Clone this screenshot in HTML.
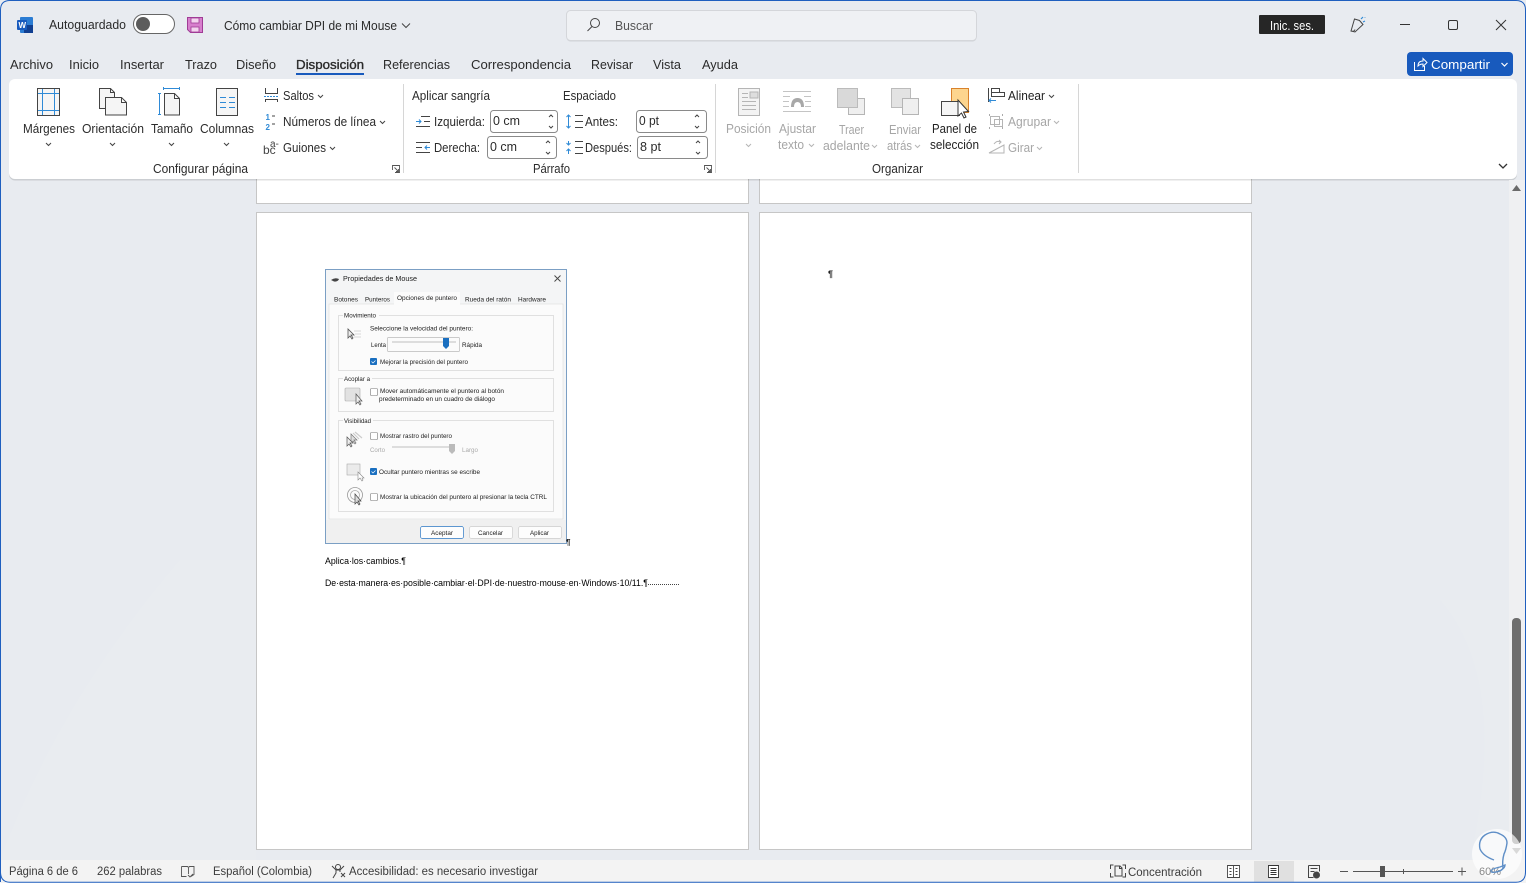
<!DOCTYPE html>
<html><head><meta charset="utf-8"><style>
html,body{margin:0;padding:0;width:1526px;height:883px;overflow:hidden;background:#e8ebf0}
svg{display:block;position:absolute;left:0;top:0}
text{font-family:"Liberation Sans",sans-serif;font-size:12.5px;fill:#2b2b2b;white-space:pre}
.g text,text.g{fill:#a6a6a6}
.s text{font-size:11.5px;fill:#3c3c3c}
.d text{font-size:6.8px;fill:#1c1c1c}
.i{fill:none;stroke:#4a4a4a;stroke-width:1}
.b{fill:none;stroke:#2f8ad6;stroke-width:1}
.c{fill:none;stroke:#444;stroke-width:1}
.gi{fill:none;stroke:#b5b5b5;stroke-width:1}
</style></head><body>
<svg width="1526" height="883" viewBox="0 0 1526 883" xmlns="http://www.w3.org/2000/svg">
<rect width="1526" height="883" fill="#e8ebf0"/>
<path d="M1440 600Q1510 680 1470 860L1512 860L1512 600Z" fill="#e9ecf0"/>
<path d="M0 860Q60 700 180 560L256 560L256 860Z" fill="#e9ecf0"/>

<!-- pages -->
<rect x="256.500" y="150" width="492" height="53.500" fill="#fff" stroke="#c6c6c6"/>
<rect x="759.500" y="150" width="492" height="53.500" fill="#fff" stroke="#c6c6c6"/>
<rect x="256.500" y="212.500" width="492" height="637" fill="#fff" stroke="#c6c6c6"/>
<rect x="759.500" y="212.500" width="492" height="637" fill="#fff" stroke="#c6c6c6"/>
<text x="828" y="277" style="font-size:9px;fill:#222;font-weight:bold">¶</text>

<!-- dialog image -->
<g class="d" style="filter:blur(.35px)">
<rect x="325.500" y="269.500" width="241" height="274" fill="#f4f5f6" stroke="#7b9fc4"/>
<rect x="329" y="304" width="234" height="215" fill="#fbfbfb" stroke="#dcdcdc" stroke-width=".6"/>
<rect x="394" y="292" width="66" height="13" fill="#fbfbfb"/>
<rect x="326" y="520" width="240" height="23" fill="#f0f0f0"/>
<path d="M331 280q4-3 8-1q-1 3-5 2.500z" fill="#444"/>
<text x="343" y="281" textLength="74" lengthAdjust="spacingAndGlyphs" style="font-size:7.400px">Propiedades de Mouse</text>
<path d="M554.500 275.500l6 6m0-6l-6 6" stroke="#444" fill="none" stroke-width=".9"/>
<text x="334" y="301.500" textLength="24" lengthAdjust="spacingAndGlyphs">Botones</text>
<text x="365" y="301.500" textLength="25" lengthAdjust="spacingAndGlyphs">Punteros</text>
<text x="397" y="300" textLength="60" lengthAdjust="spacingAndGlyphs">Opciones de puntero</text>
<text x="465" y="301.500" textLength="46" lengthAdjust="spacingAndGlyphs">Rueda del ratón</text>
<text x="518" y="301.500" textLength="28" lengthAdjust="spacingAndGlyphs">Hardware</text>
<g fill="none" stroke="#dadada" stroke-width=".8">
<rect x="338.500" y="315.500" width="215" height="55"/>
<rect x="338.500" y="378.500" width="215" height="33"/>
<rect x="338.500" y="420.500" width="215" height="91"/>
</g>
<rect x="343" y="311" width="36" height="8" fill="#fbfbfb"/>
<rect x="343" y="375" width="29" height="8" fill="#fbfbfb"/>
<rect x="343" y="417" width="30" height="8" fill="#fbfbfb"/>
<text x="344" y="317.500" textLength="32" lengthAdjust="spacingAndGlyphs">Movimiento</text>
<text x="344" y="381" textLength="26" lengthAdjust="spacingAndGlyphs">Acoplar a</text>
<text x="344" y="423" textLength="27" lengthAdjust="spacingAndGlyphs">Visibilidad</text>
<path d="M348 329l0 9 2-2 2 3 1-1-2-3 3 0z" fill="#eee" stroke="#555" stroke-width=".8"/>
<path d="M354 331h7M355 334h6M354 337h7" stroke="#ccc" stroke-width=".8"/>
<text x="370" y="330.500" textLength="103" lengthAdjust="spacingAndGlyphs">Seleccione la velocidad del puntero:</text>
<text x="371" y="347" textLength="15" lengthAdjust="spacingAndGlyphs">Lenta</text>
<rect x="387.500" y="337.500" width="72" height="14" rx="1" fill="#fbfbfb" stroke="#bbb" stroke-width=".7"/>
<rect x="392" y="341" width="64" height="2" fill="#ddd"/>
<path d="M443 338h6v8l-3 3-3-3z" fill="#1a6fc0"/>
<text x="462" y="347" textLength="20" lengthAdjust="spacingAndGlyphs">Rápida</text>
<rect x="370" y="358" width="7" height="7" rx="1" fill="#1a6fc0"/>
<path d="M371.500 361.500l1.500 1.500 2.500-2.500" stroke="#fff" fill="none" stroke-width=".7"/>
<text x="380" y="364" textLength="88" lengthAdjust="spacingAndGlyphs">Mejorar la precisión del puntero</text>
<rect x="345" y="388" width="15" height="13" rx="1" fill="#e2e2e2" stroke="#aaa" stroke-width=".6"/>
<path d="M356 394l0 10 2-2 2 3 1-1-2-3 3 0z" fill="#eee" stroke="#555" stroke-width=".7"/>
<rect x="370.500" y="388.500" width="7" height="7" rx="1" fill="#fff" stroke="#777" stroke-width=".6"/>
<text x="380" y="393" textLength="124" lengthAdjust="spacingAndGlyphs">Mover automáticamente el puntero al botón</text>
<text x="379" y="401" textLength="116" lengthAdjust="spacingAndGlyphs">predeterminado en un cuadro de diálogo</text>
<path d="M351 434l0 9 2-2 2 3 1-1-2-3 3 0z" fill="#ddd" stroke="#777" stroke-width=".7"/>
<path d="M347 437l0 9 2-2 2 3 1-1-2-3 3 0z" fill="#eee" stroke="#555" stroke-width=".7"/>
<path d="M355 432l7 6M353 433l6 6" stroke="#ccc" stroke-width="1.200"/>
<rect x="370.500" y="432.500" width="7" height="7" rx="1" fill="#fff" stroke="#777" stroke-width=".6"/>
<text x="380" y="438" textLength="72" lengthAdjust="spacingAndGlyphs">Mostrar rastro del puntero</text>
<text x="370" y="452" textLength="15" lengthAdjust="spacingAndGlyphs" style="fill:#aaa">Corto</text>
<rect x="392" y="446" width="60" height="2" fill="#ddd"/>
<path d="M449 444h6v7l-3 3-3-3z" fill="#bbb"/>
<text x="462" y="452" textLength="16" lengthAdjust="spacingAndGlyphs" style="fill:#aaa">Largo</text>
<rect x="347" y="464" width="13" height="11" fill="#ebebeb" stroke="#aaa" stroke-width=".6"/>
<path d="M358 472l0 8 2-2 2 3 1-1-1-2 2 0z" fill="#fff" stroke="#888" stroke-width=".6"/>
<rect x="370" y="468" width="7" height="7" rx="1" fill="#1a6fc0"/>
<path d="M371.500 471.500l1.500 1.500 2.500-2.500" stroke="#fff" fill="none" stroke-width=".7"/>
<text x="379" y="474" textLength="101" lengthAdjust="spacingAndGlyphs">Ocultar puntero mientras se escribe</text>
<circle cx="355" cy="495" r="7.500" fill="none" stroke="#999" stroke-width=".8"/>
<circle cx="355" cy="495" r="4.500" fill="none" stroke="#aaa" stroke-width=".8"/>
<path d="M355 494l0 10 2-2 2 3 1-1-2-3 3 0z" fill="#ddd" stroke="#444" stroke-width=".7"/>
<rect x="370.500" y="493.500" width="7" height="7" rx="1" fill="#fff" stroke="#777" stroke-width=".6"/>
<text x="380" y="499" textLength="167" lengthAdjust="spacingAndGlyphs">Mostrar la ubicación del puntero al presionar la tecla CTRL</text>
<rect x="420.500" y="526.500" width="43" height="12" rx="2" fill="#fdfdfd" stroke="#2a76c4" stroke-width=".7"/>
<rect x="469.500" y="526.500" width="43" height="12" rx="2" fill="#fdfdfd" stroke="#ccc" stroke-width=".7"/>
<rect x="518.500" y="526.500" width="43" height="12" rx="2" fill="#fdfdfd" stroke="#ccc" stroke-width=".7"/>
<text x="431" y="535" textLength="22" lengthAdjust="spacingAndGlyphs">Aceptar</text>
<text x="478" y="535" textLength="25" lengthAdjust="spacingAndGlyphs">Cancelar</text>
<text x="530" y="535" textLength="19" lengthAdjust="spacingAndGlyphs">Aplicar</text>
</g>
<text x="566" y="545" style="font-size:8px;fill:#222;font-weight:bold">¶</text>
<g style="filter:blur(.2px)">
<text x="325" y="564" textLength="81" lengthAdjust="spacingAndGlyphs" style="font-size:9px;fill:#000">Aplica·los·cambios.¶</text>
<text x="325" y="586" textLength="323" lengthAdjust="spacingAndGlyphs" style="font-size:9px;fill:#000">De·esta·manera·es·posible·cambiar·el·DPI·de·nuestro·mouse·en·Windows·10/11.¶</text>
<path d="M648 584.500H680" stroke="#444" stroke-dasharray="1 1"/>
</g>

<!-- title bar -->
<rect x="0" y="0" width="1526" height="79" fill="#e8ebf0"/>
<rect x="20" y="17" width="13" height="16" rx="1" fill="#2b7cd3"/>
<rect x="24" y="25" width="9" height="8" fill="#103f91"/>
<rect x="17" y="20" width="10" height="10" rx="1" fill="#185abd"/>
<text x="18.500" y="28" style="font-size:8px;font-weight:bold;fill:#fff">W</text>
<text x="49" y="29" textLength="77" lengthAdjust="spacingAndGlyphs">Autoguardado</text>
<rect x="133.500" y="14.500" width="41" height="19" rx="9.500" fill="#fff" stroke="#666"/>
<circle cx="143" cy="24" r="7" fill="#5c5c5c"/>
<path d="M187.500 17.500h15v15h-12l-3-3z" fill="#d77fcd" stroke="#a03c96"/>
<rect x="191" y="18" width="8" height="5" fill="#f3d4ef" stroke="#a03c96" stroke-width=".8"/>
<rect x="191" y="27" width="8" height="5" fill="#f3d4ef" stroke="#a03c96" stroke-width=".8"/>
<text x="224" y="30" textLength="173" lengthAdjust="spacingAndGlyphs">Cómo cambiar DPI de mi Mouse</text>
<path d="M402 23.500l4 4 4-4" class="c" stroke-width="1.300"/>
<rect x="566.500" y="11.500" width="410" height="30" rx="4" fill="#000" opacity=".1"/>
<rect x="566.500" y="10.500" width="410" height="30" rx="4" fill="#eff1f4" stroke="#d4d6da"/>
<circle cx="595" cy="23" r="4.500" class="c"/>
<path d="M592 26.500l-4.500 4.500" class="c"/>
<text x="615" y="30" textLength="38" lengthAdjust="spacingAndGlyphs" style="fill:#555">Buscar</text>
<rect x="1259" y="15" width="66" height="19" rx="1" fill="#262626"/>
<text x="1270" y="30" textLength="44" lengthAdjust="spacingAndGlyphs" style="fill:#fff">Inic. ses.</text>
<path d="M1351 31l3.500-12 5 1.500 3.500 4-8 7.500zM1351 31q3 1 4-1.500" class="c"/>
<path d="M1361 19l2-2M1363 22l2-1M1365 17.500l0 .5" stroke="#2f8ad6" stroke-width="1.200" fill="none"/>
<path d="M1400 24.500h10" stroke="#333" stroke-width="1"/>
<rect x="1448.500" y="20.500" width="9" height="9" rx="1.500" fill="none" stroke="#333"/>
<path d="M1496 20l10 10m0-10l-10 10" stroke="#333" stroke-width="1" fill="none"/>

<!-- tabs -->
<text x="10" y="69" textLength="43" lengthAdjust="spacingAndGlyphs">Archivo</text>
<text x="69" y="69" textLength="30" lengthAdjust="spacingAndGlyphs">Inicio</text>
<text x="120" y="69" textLength="44" lengthAdjust="spacingAndGlyphs">Insertar</text>
<text x="185" y="69" textLength="32" lengthAdjust="spacingAndGlyphs">Trazo</text>
<text x="236" y="69" textLength="40" lengthAdjust="spacingAndGlyphs">Diseño</text>
<text x="296" y="69" textLength="68" lengthAdjust="spacingAndGlyphs" stroke="#2b2b2b" stroke-width=".35">Disposición</text>
<rect x="296" y="73" width="68" height="2" fill="#185abd"/>
<text x="383" y="69" textLength="67" lengthAdjust="spacingAndGlyphs">Referencias</text>
<text x="471" y="69" textLength="100" lengthAdjust="spacingAndGlyphs">Correspondencia</text>
<text x="591" y="69" textLength="42" lengthAdjust="spacingAndGlyphs">Revisar</text>
<text x="653" y="69" textLength="28" lengthAdjust="spacingAndGlyphs">Vista</text>
<text x="702" y="69" textLength="36" lengthAdjust="spacingAndGlyphs">Ayuda</text>
<rect x="1407" y="52" width="106" height="24" rx="4" fill="#185abd"/>
<path d="M1414.500 62v8.500h10V66M1418 66q0-5 5-5v-2.500l4 4-4 4V64q-3 0-5 2z" fill="none" stroke="#fff"/>
<text x="1431" y="69" textLength="59" lengthAdjust="spacingAndGlyphs" style="fill:#fff">Compartir</text>
<path d="M1501.500 63l3 3 3-3" fill="none" stroke="#fff" stroke-width="1.200"/>

<!-- ribbon -->
<rect x="9" y="79" width="1508" height="100" rx="6" fill="#000" opacity=".12" transform="translate(0,1.500)"/>
<rect x="9" y="79" width="1508" height="100" rx="6" fill="#fff"/>
<path d="M403.500 84v89M715.500 84v89M1078.500 84v89" stroke="#d6d6d6"/>

<!-- Page setup icons -->
<rect x="37.500" y="88.500" width="22" height="27" fill="#f5f5f5" stroke="#444"/>
<path d="M42.500 89v26M54.500 89v26M38 93.500h21M38 110.500h21" class="b"/>
<path d="M99.500 88.500h11l4 4v5h-8v11h-7zM110.500 88.500v4h4" fill="#f5f5f5" stroke="#444"/>
<path d="M105.500 97.500h16l5 5v12.500h-21zM121.500 97.500v5h5" fill="#f5f5f5" stroke="#444"/>
<path d="M163.500 88.500h16M163.500 87v3M179.500 87v3M159.500 93v22M158 93.500h3M158 114.500h3" class="b"/>
<path d="M164.500 93.500h10l5 5v16.500h-15zM174.500 93.500v5h5" fill="#f5f5f5" stroke="#444"/>
<rect x="216.500" y="88.500" width="21" height="27" fill="#f5f5f5" stroke="#444"/>
<path d="M220 97.500h6M229 97.500h6M220 102.500h6M229 102.500h6M220 107.500h6M229 107.500h6" class="b"/>
<text x="23" y="133" textLength="52" lengthAdjust="spacingAndGlyphs">Márgenes</text>
<text x="82" y="133" textLength="62" lengthAdjust="spacingAndGlyphs">Orientación</text>
<text x="151" y="133" textLength="42" lengthAdjust="spacingAndGlyphs">Tamaño</text>
<text x="200" y="133" textLength="54" lengthAdjust="spacingAndGlyphs">Columnas</text>
<path d="M46 143l2.500 2.500 2.500-2.500M110 143l2.500 2.500 2.500-2.500M169 143l2.500 2.500 2.500-2.500M224 143l2.500 2.500 2.500-2.500" class="c"/>

<path d="M265.500 88v5.500h12V88M265.500 102v-2.500h12v2.500" fill="none" stroke="#444"/>
<path d="M264 96.500h15" stroke="#2f8ad6" stroke-dasharray="2 1" fill="none"/>
<text x="283" y="100" textLength="31" lengthAdjust="spacingAndGlyphs">Saltos</text>
<path d="M318 95l2.500 2.500 2.500-2.500" class="c"/>
<text x="265.500" y="120" style="font-size:8px;fill:#2f8ad6;font-weight:bold">1</text>
<text x="265.500" y="130" style="font-size:8px;fill:#2f8ad6;font-weight:bold">2</text>
<path d="M272 116h3M272 124h3" stroke="#444"/>
<text x="283" y="126" textLength="93" lengthAdjust="spacingAndGlyphs">Números de línea</text>
<path d="M380 121l2.500 2.500 2.500-2.500" class="c"/>
<text x="263" y="154" style="font-size:12px;fill:#444">bc</text>
<text x="270" y="147" style="font-size:10px;fill:#444">a-</text>
<text x="283" y="152" textLength="43" lengthAdjust="spacingAndGlyphs">Guiones</text>
<path d="M330 147l2.500 2.500 2.500-2.500" class="c"/>
<text x="153" y="173" textLength="95" lengthAdjust="spacingAndGlyphs">Configurar página</text>
<path d="M392.500 170v-4.500h7v7H395M394.500 167.500l4 4M398.500 169v2.500H396" fill="none" stroke="#555" stroke-width=".9"/>

<!-- Paragraph -->
<text x="412" y="100" textLength="78" lengthAdjust="spacingAndGlyphs">Aplicar sangría</text>
<text x="563" y="100" textLength="53" lengthAdjust="spacingAndGlyphs">Espaciado</text>
<path d="M421 116.500h9M416 126.500h14M424 121.500h6" stroke="#444"/>
<path d="M416 121.500h5M419 119.500l2 2-2 2" class="b"/>
<path d="M416 142.500h14M416 152.500h14M416 147.500h6" stroke="#444"/>
<path d="M425 147.500h5M427 145.500l-2 2 2 2" class="b"/>
<text x="434" y="126" textLength="51" lengthAdjust="spacingAndGlyphs">Izquierda:</text>
<text x="434" y="152" textLength="46" lengthAdjust="spacingAndGlyphs">Derecha:</text>
<text x="585" y="126" textLength="33" lengthAdjust="spacingAndGlyphs">Antes:</text>
<text x="585" y="152" textLength="47" lengthAdjust="spacingAndGlyphs">Después:</text>
<g fill="#fff" stroke="#8a8a8a">
<rect x="490.500" y="110.500" width="67" height="22" rx="3"/>
<rect x="487.500" y="136.500" width="69" height="22" rx="3"/>
<rect x="636.500" y="110.500" width="70" height="22" rx="3"/>
<rect x="637.500" y="136.500" width="70" height="22" rx="3"/>
</g>
<text x="493" y="125" textLength="27" lengthAdjust="spacingAndGlyphs">0 cm</text>
<text x="490" y="151" textLength="27" lengthAdjust="spacingAndGlyphs">0 cm</text>
<text x="639" y="125" textLength="20" lengthAdjust="spacingAndGlyphs">0 pt</text>
<text x="640" y="151" textLength="21" lengthAdjust="spacingAndGlyphs">8 pt</text>
<path d="M549 117l2-2 2 2M549 126l2 2 2-2M546 143l2-2 2 2M546 152l2 2 2-2M695 117l2-2 2 2M695 126l2 2 2-2M696 143l2-2 2 2M696 152l2 2 2-2" class="c"/>
<path d="M568.500 115v13M566.500 117l2-2 2 2M566.500 126l2 2 2-2M568.500 141v4M566.500 143l2 2 2-2M568.500 149v5M566.500 151l2-2 2 2" class="b"/>
<path d="M575 115.500h8M575 121.500h8M575 127.500h8M575 141.500h8M575 147.500h8M575 153.500h8" stroke="#444"/>
<text x="533" y="173" textLength="37" lengthAdjust="spacingAndGlyphs">Párrafo</text>
<path d="M704.500 170v-4.500h7v7H707M706.500 167.500l4 4M710.500 169v2.500H708" fill="none" stroke="#555" stroke-width=".9"/>

<!-- Arrange -->
<rect x="738.500" y="88.500" width="21" height="27" fill="#f3f3f3" stroke="#b5b5b5"/>
<rect x="750" y="92" width="8" height="6" fill="#ddd" stroke="#b5b5b5"/>
<path d="M742 93.500h6M742 97.500h6M742 101.500h14M742 105.500h14M742 109.500h14" class="gi"/>
<path d="M783 91.500h28M783 96.500h7M804 96.500h7M783 101.500h6M805 101.500h6M783 106.500h6M805 106.500h6M783 111.500h28" stroke="#c4c4c4" fill="none"/>
<path d="M791 107q0-9 6.500-9t6.500 9h-3q0-5-3.500-5t-3.500 5z" fill="#a8a8a8"/>
<rect x="848.500" y="98.500" width="16" height="16" fill="#efefef" stroke="#b5b5b5"/>
<rect x="837.500" y="88.500" width="20" height="19" fill="#d9d9d9" stroke="#bbb"/>
<rect x="891.500" y="88.500" width="19" height="19" fill="#e3e3e3" stroke="#bbb"/>
<rect x="902.500" y="98.500" width="16" height="16" fill="#efefef" stroke="#b5b5b5"/>
<rect x="951.500" y="88.500" width="17" height="24" fill="#fdd58e" stroke="#d9822b"/>
<rect x="941.500" y="101.500" width="18" height="14" fill="#f5f5f5" stroke="#444"/>
<path d="M958 100l0 16 3.500-3 2.500 5 2-1-2.500-5 5-.5z" fill="#fff" stroke="#333"/>
<g class="g">
<text x="726" y="133" textLength="45" lengthAdjust="spacingAndGlyphs">Posición</text>
<text x="779" y="133" textLength="37" lengthAdjust="spacingAndGlyphs">Ajustar</text>
<text x="778" y="149" textLength="26" lengthAdjust="spacingAndGlyphs">texto</text>
<text x="839" y="134" textLength="25" lengthAdjust="spacingAndGlyphs">Traer</text>
<text x="823" y="150" textLength="47" lengthAdjust="spacingAndGlyphs">adelante</text>
<text x="889" y="134" textLength="32" lengthAdjust="spacingAndGlyphs">Enviar</text>
<text x="887" y="150" textLength="25" lengthAdjust="spacingAndGlyphs">atrás</text>
<text x="1008" y="126" textLength="43" lengthAdjust="spacingAndGlyphs">Agrupar</text>
<text x="1008" y="152" textLength="26" lengthAdjust="spacingAndGlyphs">Girar</text>
</g>
<path d="M746 144l2.500 2.500 2.500-2.500M809 144l2.500 2.500 2.500-2.500M872 145l2.500 2.500 2.500-2.500M915 145l2.500 2.500 2.500-2.500M1054 121l2.500 2.500 2.500-2.500M1037 147l2.500 2.500 2.500-2.500" class="gi"/>
<text x="932" y="133" textLength="45" lengthAdjust="spacingAndGlyphs" style="fill:#222">Panel de</text>
<text x="930" y="149" textLength="49" lengthAdjust="spacingAndGlyphs" style="fill:#222">selección</text>
<path d="M988.500 88v14" stroke="#444"/>
<rect x="991.500" y="88.500" width="8" height="4" fill="#fff" stroke="#444"/>
<rect x="991.500" y="92.500" width="13" height="4" fill="#fff" stroke="#444"/>
<path d="M989 100.500h7M991 98.500l-2 2 2 2" class="b"/>
<text x="1008" y="100" textLength="37" lengthAdjust="spacingAndGlyphs" style="fill:#222">Alinear</text>
<path d="M1049 95l2.500 2.500 2.500-2.500" class="c"/>
<path d="M989 115h1M1002 115h1M989 128h1M1002 128h1" stroke="#aaa" stroke-width="2"/>
<rect x="990.500" y="116.500" width="9" height="8" fill="none" stroke="#b5b5b5"/>
<rect x="994.500" y="119.500" width="8" height="7" fill="none" stroke="#b5b5b5"/>
<path d="M989 153l15-8v8zM994 144q3-4 6-2M999 140l2 2-2 2" class="gi"/>
<path d="M1499 164l4 4 4-4" fill="none" stroke="#333" stroke-width="1.300"/>
<text x="872" y="173" textLength="51" lengthAdjust="spacingAndGlyphs">Organizar</text>

<!-- scrollbar -->
<rect x="1509" y="180" width="17" height="680" fill="#eff0f2"/>
<path d="M1512 191l4.500-6 4.500 6z" fill="#6a6a6a"/>
<rect x="1512" y="618" width="9" height="226" rx="4" fill="#6e6e6e"/>
<path d="M1512 848l4.500 6 4.500-6z" fill="#888"/>

<!-- status bar -->
<rect x="0" y="860" width="1526" height="23" fill="#f3f3f3"/>
<g class="s">
<text x="9" y="875" textLength="69" lengthAdjust="spacingAndGlyphs">Página 6 de 6</text>
<text x="97" y="875" textLength="65" lengthAdjust="spacingAndGlyphs">262 palabras</text>
<text x="213" y="875" textLength="99" lengthAdjust="spacingAndGlyphs">Español (Colombia)</text>
<text x="349" y="875" textLength="189" lengthAdjust="spacingAndGlyphs">Accesibilidad: es necesario investigar</text>
<text x="1128" y="876" textLength="74" lengthAdjust="spacingAndGlyphs">Concentración</text>
</g>
<path d="M181.500 866.500h6l1 1 1-1h4.500v8l-3 2M181.500 866.500v10h5M188.500 868v6M188 875l2 2 3-3" fill="none" stroke="#555" stroke-width=".9"/>
<circle cx="338" cy="867" r="2.500" fill="none" stroke="#444"/>
<path d="M332 866l4 4h4l4-4M336 870v3l-3 5M340 870v2M341 873l4 4m0-4l-4 4" fill="none" stroke="#444"/>
<path d="M1110.500 869v-4h3M1122.500 865h3v4M1110.500 873v4h3M1122.500 877h3v-4" fill="none" stroke="#444"/>
<path d="M1115 866h5l2 2v8h-7zM1119.500 866v2.500h2.500" fill="none" stroke="#444"/>
<rect x="1254" y="861" width="40" height="21" fill="#e0e0e0"/>
<path d="M1227.500 865.500h12v12h-12zM1233.500 865.500v12M1229.500 868.500h2M1229.500 871.500h2M1229.500 874.500h2M1235.500 868.500h2M1235.500 871.500h2M1235.500 874.500h2" fill="#fff" stroke="#444" stroke-width=".9"/>
<path d="M1268.500 865.500h10v12h-10zM1270.500 868.500h6M1270.500 870.500h6M1270.500 872.500h6M1270.500 874.500h6" fill="#fff" stroke="#333" stroke-width=".9"/>
<path d="M1308.500 865.500h11v6M1308.500 865.500v12h5M1310.500 868.500h7M1310.500 871.500h4" fill="none" stroke="#444"/>
<circle cx="1316.500" cy="875" r="3.500" fill="#444"/>
<path d="M1340 871.500h8M1353 871.500h100" stroke="#555"/>
<path d="M1403.500 869v5M1458 871.500h8M1462 867.500v8" stroke="#555"/>
<rect x="1380" y="866" width="5" height="11" fill="#555"/>

<!-- watermark -->
<circle cx="1497" cy="854" r="25" fill="#fff" opacity=".68"/>
<text x="1479" y="875" textLength="22" lengthAdjust="spacingAndGlyphs" style="font-size:11px;fill:#888">60%</text>
<path d="M1494 860q-11-4-14-11q-2-9 5-14q8-5 15-1q7 3 7 9q-1 7-3 11q-2 7-1 14q-1 3-7 4q-5 1-5-1q0-2 9-4l5-2q0 3-4 5" fill="none" stroke="#5f8fc7" stroke-width="1.400"/>

<!-- window border -->
<path d="M.5 882V10Q.5.500 10 .5H1516Q1525.500.500 1525.500 10V872Q1525.500 882 1516 882.300H10Q.5 882 .5 872" fill="none" stroke="#1f5fbf"/>
</svg>
</body></html>
